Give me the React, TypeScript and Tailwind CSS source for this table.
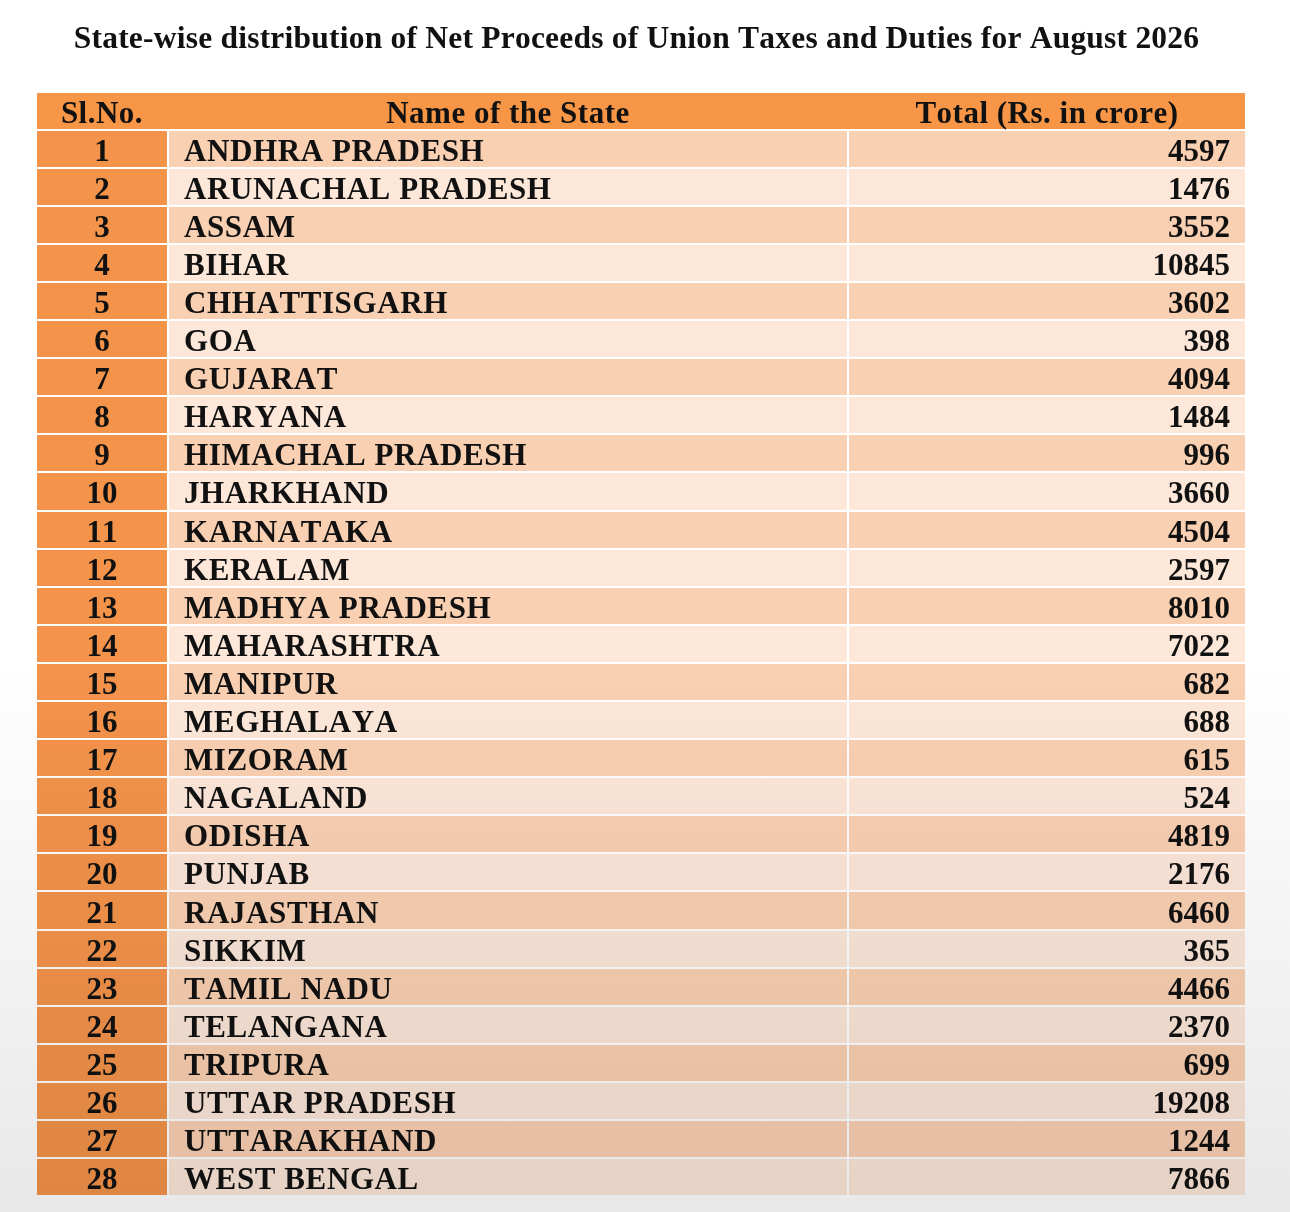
import React from "react";

const rows: [number, string, string][] = [
  [1, "ANDHRA PRADESH", "4597"],
  [2, "ARUNACHAL PRADESH", "1476"],
  [3, "ASSAM", "3552"],
  [4, "BIHAR", "10845"],
  [5, "CHHATTISGARH", "3602"],
  [6, "GOA", "398"],
  [7, "GUJARAT", "4094"],
  [8, "HARYANA", "1484"],
  [9, "HIMACHAL PRADESH", "996"],
  [10, "JHARKHAND", "3660"],
  [11, "KARNATAKA", "4504"],
  [12, "KERALAM", "2597"],
  [13, "MADHYA PRADESH", "8010"],
  [14, "MAHARASHTRA", "7022"],
  [15, "MANIPUR", "682"],
  [16, "MEGHALAYA", "688"],
  [17, "MIZORAM", "615"],
  [18, "NAGALAND", "524"],
  [19, "ODISHA", "4819"],
  [20, "PUNJAB", "2176"],
  [21, "RAJASTHAN", "6460"],
  [22, "SIKKIM", "365"],
  [23, "TAMIL NADU", "4466"],
  [24, "TELANGANA", "2370"],
  [25, "TRIPURA", "699"],
  [26, "UTTAR PRADESH", "19208"],
  [27, "UTTARAKHAND", "1244"],
  [28, "WEST BENGAL", "7866"],
];

export default function App() {
  return (
    <div
      className="relative w-[1290px] h-[1212px] overflow-hidden bg-white text-[#111] [font-kerning:none]"
      style={{ fontFamily: '"Liberation Serif", "Times New Roman", serif' }}
    >
      <h1 className="pt-[22px] pr-[17px] text-center text-[31.5px] tracking-[0.22px] font-bold leading-none whitespace-nowrap">
        State-wise distribution of Net Proceeds of Union Taxes and Duties for August 2026
      </h1>
      <div className="ml-[37px] mt-[39px] w-[1208px] flex flex-col gap-y-[2px] bg-white">
        <div className="h-[36.1px] grid grid-cols-[130px_2px_678px_2px_396px] items-center bg-[#f79646] pt-[3px] text-[31px] tracking-[0.5px] font-bold leading-none">
          <div className="text-center">Sl.No.</div>
          <div />
          <div className="text-center">Name of the State</div>
          <div />
          <div className="text-center">Total (Rs. in crore)</div>
        </div>
        {rows.map(([n, name, total]) => {
          const odd = n % 2 === 1;
          return (
            <div
              key={n}
              className="h-[36.1px] grid grid-cols-[130px_678px_396px] gap-x-[2px] text-[31px] font-bold leading-none"
            >
              <div className="flex items-center justify-center pt-[3px] bg-[#f4934a]">{n}</div>
              <div
                className={
                  odd
                    ? "flex items-center pl-[15px] pt-[3px] tracking-[0.6px] bg-[#fad0b2]"
                    : "flex items-center pl-[15px] pt-[3px] tracking-[0.6px] bg-[#fce7d9]"
                }
              >
                {name}
              </div>
              <div
                className={
                  odd
                    ? "flex items-center justify-end pr-[15px] pt-[3px] bg-[#fad0b2]"
                    : "flex items-center justify-end pr-[15px] pt-[3px] bg-[#fce7d9]"
                }
              >
                {total}
              </div>
            </div>
          );
        })}
      </div>
      <div
        className="pointer-events-none absolute inset-0 mix-blend-multiply"
        style={{
          background:
            "linear-gradient(to bottom, #ffffff 0%, #ffffff 55%, #e8e8e8 100%)",
        }}
      />
    </div>
  );
}
